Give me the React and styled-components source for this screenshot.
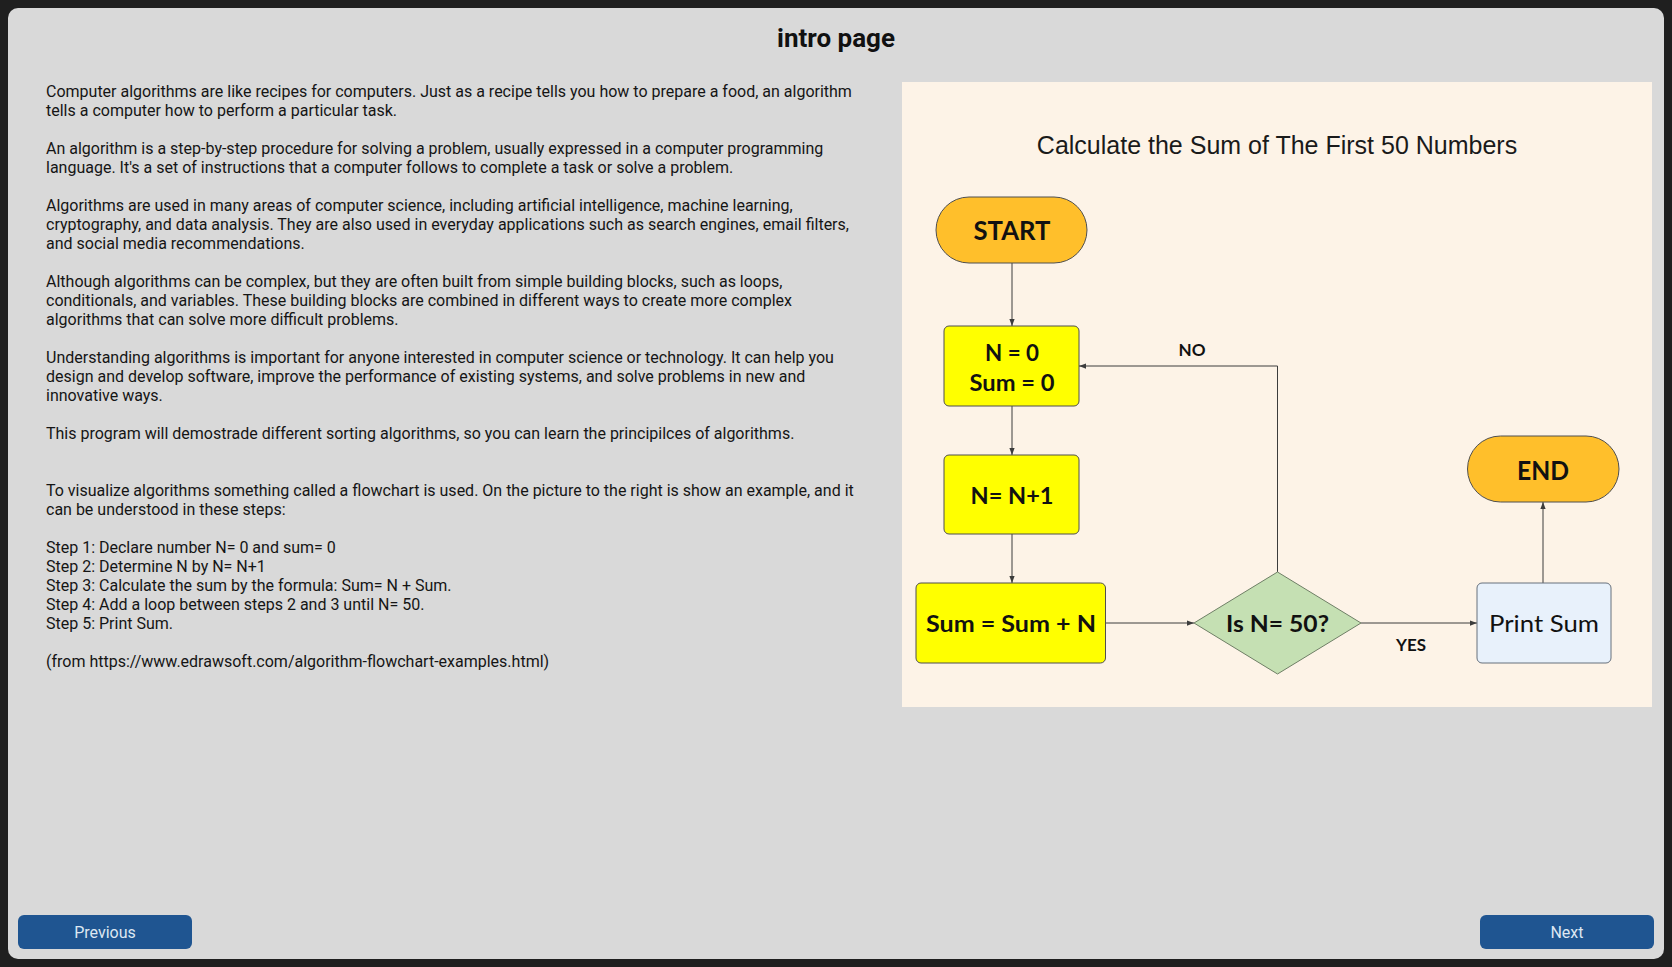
import React from 'react';
import styled, { createGlobalStyle } from 'styled-components';

const GlobalStyle = createGlobalStyle`
  html, body {
    margin: 0;
    padding: 0;
    background: #1f1f1f;
  }
  body {
    padding: 8px;
    box-sizing: border-box;
    height: 100vh;
    font-family: Roboto, "Liberation Sans", Arial, sans-serif;
  }
  #root {
    height: 100%;
  }
`;

const Panel = styled.div`
  box-sizing: border-box;
  height: 100%;
  background: #d9d9d9;
  border-radius: 10px;
  padding: 10px;
  display: flex;
  flex-direction: column;
`;

const Title = styled.h1`
  margin: 5px 0 29px;
  text-align: center;
  font-size: 26px;
  line-height: 30px;
  font-weight: 700;
  color: #111;
`;

const Content = styled.div`
  display: grid;
  grid-template-columns: 1fr 750px;
  align-items: start;
  padding-right: 2px;
`;

const TextColumn = styled.div`
  padding-left: 28px;
  width: 812px;
  font-size: 16px;
  line-height: 19px;
  color: #151515;
`;

const Paragraph = styled.p`
  margin: 0 0 ${(p) => (p.$wide ? '38px' : '19px')};
`;

const Picture = styled.div`
  width: 750px;
  height: 625px;
  background: #fdf3e7;
`;

const Footer = styled.div`
  margin-top: auto;
  display: flex;
  justify-content: space-between;
`;

const NavButton = styled.button`
  width: 174px;
  height: 34px;
  border: none;
  border-radius: 6px;
  background: #1f5591;
  color: #dde7f2;
  font-family: Roboto, "Liberation Sans", Arial, sans-serif;
  font-size: 16px;
  cursor: pointer;
`;

const BOX = '#4f4f4f';
const LINE = '#3c3c3c';
const CHART_FONT = 'Lato, "Open Sans", sans-serif';

const Label = ({ x, y, size, width, weight = 700, children }) => (
  <text
    x={x}
    y={y}
    fontFamily={CHART_FONT}
    fontSize={size}
    fontWeight={weight}
    fill="#111"
    textAnchor="middle"
    dominantBaseline="central"
    textLength={width}
    lengthAdjust="spacingAndGlyphs"
  >
    {children}
  </text>
);

const Flowchart = () => (
  <svg width="750" height="625" viewBox="0 0 750 625">
    <defs>
      <marker id="arrow" viewBox="0 0 8 8" refX="8" refY="4" markerWidth="7" markerHeight="7" orient="auto-start-reverse">
        <path d="M0 1 L8 4 L0 7 Z" fill={LINE} />
      </marker>
    </defs>

    <text
      x="375"
      y="63"
      fontFamily='"Liberation Sans", Arial, sans-serif'
      fontSize="25"
      fill="#1a1a1a"
      textAnchor="middle"
      dominantBaseline="central"
    >
      Calculate the Sum of The First 50 Numbers
    </text>

    <g stroke={LINE} strokeWidth="1" fill="none">
      <line x1="110" y1="181" x2="110" y2="244" markerEnd="url(#arrow)" />
      <line x1="110" y1="324" x2="110" y2="373" markerEnd="url(#arrow)" />
      <line x1="110" y1="452" x2="110" y2="501" markerEnd="url(#arrow)" />
      <line x1="203.5" y1="541" x2="292" y2="541" markerEnd="url(#arrow)" />
      <polyline points="375.5,490 375.5,284 177,284" markerEnd="url(#arrow)" />
      <line x1="459" y1="541" x2="575" y2="541" markerEnd="url(#arrow)" />
      <line x1="641" y1="501" x2="641" y2="420" markerEnd="url(#arrow)" />
    </g>

    <rect x="34" y="115" width="151" height="66" rx="33" fill="#ffbf2b" stroke={BOX} />
    <Label x="110" y="148" size="26" width="77">START</Label>

    <rect x="42" y="244" width="135" height="80" rx="5" fill="#ffff00" stroke={BOX} />
    <Label x="110" y="270" size="23" width="54">N = 0</Label>
    <Label x="110" y="300" size="23" width="85">Sum = 0</Label>

    <rect x="42" y="373" width="135" height="79" rx="5" fill="#ffff00" stroke={BOX} />
    <Label x="110" y="413" size="23" width="83">N= N+1</Label>

    <rect x="14" y="501" width="189.5" height="80" rx="5" fill="#ffff00" stroke={BOX} />
    <Label x="109" y="541" size="23" width="170">Sum = Sum + N</Label>

    <polygon points="375.5,490 459,541 375.5,592 292,541" fill="#c5e0b3" stroke="#6f7f66" />
    <Label x="375.5" y="541" size="23" width="103">Is N= 50?</Label>

    <Label x="290" y="267" size="17" width="27">NO</Label>
    <Label x="509" y="562" size="17" width="30">YES</Label>

    <rect x="575" y="501" width="134" height="80" rx="5" fill="#e8f1fb" stroke="#66707c" />
    <Label x="642" y="541" size="23" width="110" weight={400}>Print Sum</Label>

    <rect x="565.5" y="354" width="151.5" height="66" rx="33" fill="#ffbf2b" stroke={BOX} />
    <Label x="641" y="388" size="26" width="52">END</Label>
  </svg>
);

const App = () => (
  <>
    <GlobalStyle />
    <Panel>
      <Title>intro page</Title>
      <Content>
        <TextColumn>
          <Paragraph>
            Computer algorithms are like recipes for computers. Just as a recipe tells you how to prepare a food, an algorithm tells a computer how to perform a particular task.
          </Paragraph>
          <Paragraph>
            An algorithm is a step-by-step procedure for solving a problem, usually expressed in a computer programming language. It's a set of instructions that a computer follows to complete a task or solve a problem.
          </Paragraph>
          <Paragraph>
            Algorithms are used in many areas of computer science, including artificial intelligence, machine learning, cryptography, and data analysis. They are also used in everyday applications such as search engines, email filters, and social media recommendations.
          </Paragraph>
          <Paragraph>
            Although algorithms can be complex, but they are often built from simple building blocks, such as loops, conditionals, and variables. These building blocks are combined in different ways to create more complex algorithms that can solve more difficult problems.
          </Paragraph>
          <Paragraph>
            Understanding algorithms is important for anyone interested in computer science or technology. It can help you design and develop software, improve the performance of existing systems, and solve problems in new and innovative ways.
          </Paragraph>
          <Paragraph $wide>
            This program will demostrade different sorting algorithms, so you can learn the principilces of algorithms.
          </Paragraph>
          <Paragraph>
            To visualize algorithms something called a flowchart is used. On the picture to the right is show an example, and it can be understood in these steps:
          </Paragraph>
          <Paragraph>
            Step 1: Declare number N= 0 and sum= 0
            <br />
            Step 2: Determine N by N= N+1
            <br />
            Step 3: Calculate the sum by the formula: Sum= N + Sum.
            <br />
            Step 4: Add a loop between steps 2 and 3 until N= 50.
            <br />
            Step 5: Print Sum.
          </Paragraph>
          <Paragraph>(from https://www.edrawsoft.com/algorithm-flowchart-examples.html)</Paragraph>
        </TextColumn>
        <Picture>
          <Flowchart />
        </Picture>
      </Content>
      <Footer>
        <NavButton>Previous</NavButton>
        <NavButton>Next</NavButton>
      </Footer>
    </Panel>
  </>
);

export default App;
